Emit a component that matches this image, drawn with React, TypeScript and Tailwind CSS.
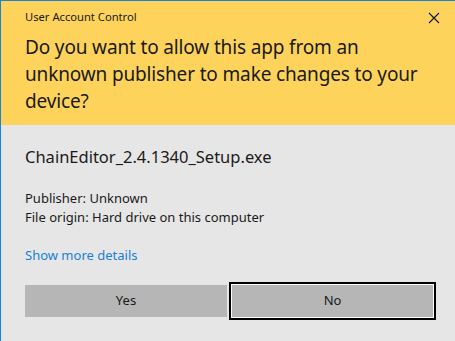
import React from "react";

export default function App() {
  return (
    <div className="w-[455px] h-[341px] overflow-hidden bg-[#e6e6e6] border-t border-l border-[#1883d7] flex flex-col font-['Noto_Sans','Open_Sans',sans-serif] text-[#000]">
      <div className="bg-[#fed35c] h-[124px] pl-6 pr-4 pt-2 shrink-0">
        <div className="flex items-start justify-between">
          <div className="text-[11.2px] leading-[16px] text-[#1a1a1a]">User Account Control</div>
          <svg width="12" height="12" viewBox="0 0 12 12" className="mt-[3px] mr-[-1px]">
            <path d="M1 1 L11 11 M11 1 L1 11" stroke="#111" strokeWidth="1.1" fill="none" />
          </svg>
        </div>
        <div className="mt-[9px] text-[19px] leading-[27px] tracking-[-0.15px] text-[#1a1a1a] whitespace-nowrap">
          Do you want to allow this app from an
          <br />
          unknown publisher to make changes to your
          <br />
          device?
        </div>
      </div>
      <div className="pl-6 pr-[22px] flex flex-col">
        <div className="mt-[22px] text-[16.5px] leading-[20px] text-[#1a1a1a]">ChainEditor_2.4.1340_Setup.exe</div>
        <div className="mt-[22px] text-[13px] leading-[19px] text-[#1a1a1a]">
          <div>Publisher: Unknown</div>
          <div>File origin: Hard drive on this computer</div>
        </div>
        <div className="mt-[19px] text-[13px] leading-[19px] text-[#1a7fd6]">Show more details</div>
        <div className="mt-[20px] flex gap-[3px]">
          <button className="w-[202px] h-[32px] bg-[#b6b6b6] text-[13px] text-[#1a1a1a]">Yes</button>
          <button className="w-[201px] h-[32px] ml-[2px] bg-[#b6b6b6] text-[13px] text-[#1a1a1a] shadow-[0_0_0_1px_#ffffff,0_0_0_3px_#000000]">No</button>
        </div>
      </div>
    </div>
  );
}
